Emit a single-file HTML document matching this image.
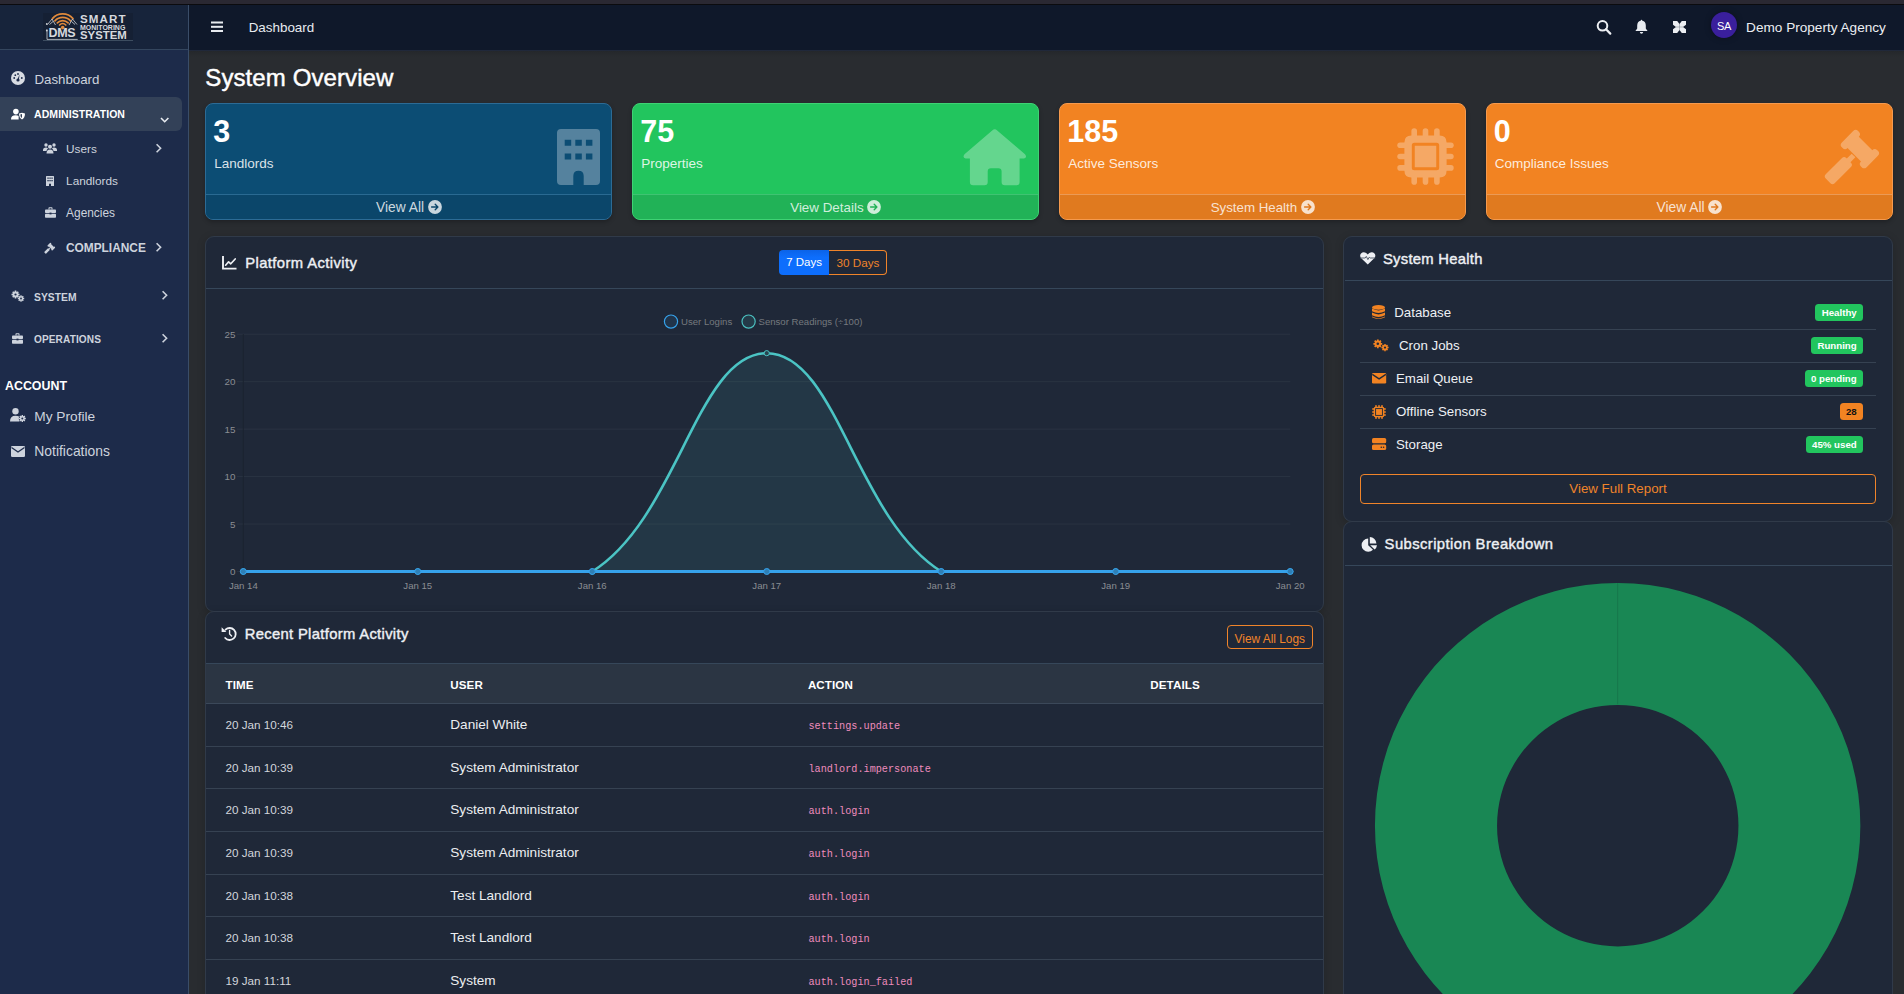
<!DOCTYPE html>
<html><head><meta charset="utf-8">
<style>
*{box-sizing:border-box;margin:0;padding:0}
html,body{width:1904px;height:994px;overflow:hidden;background:#292c30;font-family:"Liberation Sans",sans-serif;position:relative}
</style></head><body>

<div style="position:absolute;left:0px;top:0px;width:1904px;height:4px;background:#2a2832;"></div>
<div style="position:absolute;left:0px;top:4px;width:1904px;height:1px;background:#0b0b0e;"></div>
<div style="position:absolute;left:0px;top:5px;width:188px;height:989px;background:#1d2b4a;"></div>
<div style="position:absolute;left:0px;top:5px;width:188px;height:44px;background:#17243b;"></div>
<div style="position:absolute;left:0px;top:49px;width:188px;height:1px;background:#34465e;"></div>
<div style="position:absolute;left:188px;top:5px;width:1px;height:989px;background:#3a4d68;"></div>
<div style="position:absolute;left:189px;top:5px;width:1715px;height:45px;background:#0f182a;"></div>
<div style="position:absolute;left:189px;top:50px;width:1715px;height:1px;background:#20283a;"></div>
<div style="position:absolute;left:189px;top:51px;width:1715px;height:6px;background:linear-gradient(#24272b,#292c30);"></div>
<div style="position:absolute;left:43px;top:13px;width:90px;height:28px;background:#152034;"></div>
<div style="position:absolute;left:43px;top:40px;width:90px;height:1px;background:#3d4d60;"></div>
<svg style="position:absolute;left:43px;top:13px;overflow:visible;" width="40" height="28" viewBox="43 13 40 28">
<g fill="none" stroke="#e08a3c" stroke-width="1.7" stroke-linecap="round">
<path d="M52.4 18.6 A13.7 13.7 0 0 1 73 18.6"/>
<path d="M54.9 20.8 A10.6 10.6 0 0 1 70.5 20.8"/>
<path d="M57.3 22.9 A7.5 7.5 0 0 1 68.1 22.9"/>
<path d="M59.6 25 A4.4 4.4 0 0 1 65.8 25"/>
</g>
<circle cx="62.7" cy="27.6" r="1.8" fill="#e08a3c"/>
<g stroke="#cfd3d8" stroke-width="0.8" fill="none">
<path d="M47.5 24.5 L52 19 L55.5 25 M49.5 24.5 L53 21.5"/><path d="M77 24.5 L72.5 19 L69 25 M75 24.5 L71.5 21.5"/>
<path d="M47 29.5 V39.4 H77.7"/>
</g>
<circle cx="46.8" cy="24" r="0.9" fill="#cfd3d8"/><circle cx="46.8" cy="30.5" r="0.9" fill="#cfd3d8"/>
</svg>
<div style="position:absolute;top:27.02px;font-size:12.5px;line-height:1;color:#d6d9de;font-weight:bold;font-family:'Liberation Sans',sans-serif;white-space:nowrap;letter-spacing:-0.3px;left:48.50px;">DMS</div>
<div style="position:absolute;top:12.58px;font-size:11.6px;line-height:1;color:#d6d9de;font-weight:bold;font-family:'Liberation Sans',sans-serif;white-space:nowrap;letter-spacing:1.1px;left:80.00px;">SMART</div>
<div style="position:absolute;top:24.27px;font-size:7px;line-height:1;color:#d6d9de;font-weight:bold;font-family:'Liberation Sans',sans-serif;white-space:nowrap;left:80.00px;">MONITORING</div>
<div style="position:absolute;top:29.95px;font-size:11.4px;line-height:1;color:#d6d9de;font-weight:bold;font-family:'Liberation Sans',sans-serif;white-space:nowrap;left:80.00px;">SYSTEM</div>
<div style="position:absolute;left:0px;top:97px;width:182px;height:34px;background:#334158;border-radius:0 6px 6px 0"></div>
<svg style="position:absolute;left:11px;top:71px;overflow:visible;" width="14" height="14" viewBox="0 0 14 14"><circle cx="7" cy="7" r="7" fill="#d8dce3"/><circle cx="7" cy="9" r="1.6" fill="#1d2b4a"/><path d="M6.3 9 L8.6 3.2 L7.8 9.3Z" fill="#1d2b4a"/><circle cx="3.2" cy="7" r="0.9" fill="#1d2b4a"/><circle cx="4.3" cy="4.2" r="0.9" fill="#1d2b4a"/><circle cx="7" cy="3" r="0.9" fill="#1d2b4a"/><circle cx="10.8" cy="7" r="0.9" fill="#1d2b4a"/></svg>
<div style="position:absolute;top:72.64px;font-size:13.3px;line-height:1;color:#cdd3dd;font-weight:normal;font-family:'Liberation Sans',sans-serif;white-space:nowrap;left:34.40px;">Dashboard</div>
<svg style="position:absolute;left:11px;top:108px;overflow:visible;" width="15" height="12" viewBox="0 0 15 12"><circle cx="4.9" cy="3.6" r="2.8" fill="#fff"/><path d="M0 11.4 Q0 7.3 4.6 7.3 Q6.8 7.3 7.6 7.9 V11.4Z" fill="#fff"/><path d="M8 5.6 L11 4.7 L14 5.6 Q14 9.9 11 11.6 Q8 9.9 8 5.6Z" fill="#fff"/><path d="M9.3 6.5 L11 6 V10.1 Q9.3 9 9.3 6.5Z" fill="#334158"/></svg>
<div style="position:absolute;top:108.81px;font-size:10.5px;line-height:1;color:#ffffff;font-weight:bold;font-family:'Liberation Sans',sans-serif;white-space:nowrap;letter-spacing:0.05px;left:34.10px;">ADMINISTRATION</div>
<svg style="position:absolute;left:160.3px;top:116.5px;overflow:visible;" width="9.4" height="6" viewBox="0 0 9.4 6"><path d="M1 1 L4.7 4.7 L8.4 1" fill="none" stroke="#e8ebf0" stroke-width="1.6"/></svg>
<svg style="position:absolute;left:43px;top:143px;overflow:visible;" width="14" height="11" viewBox="0 0 14 11"><circle cx="3" cy="2" r="1.7" fill="#cdd3dd"/><circle cx="11" cy="2" r="1.7" fill="#cdd3dd"/><circle cx="7" cy="3.8" r="2" fill="#cdd3dd"/><path d="M0 7 Q0 4.5 3 4.5 Q4.5 4.5 5 5.5 Q3.5 6.5 3.5 8H0Z" fill="#cdd3dd"/><path d="M14 7 Q14 4.5 11 4.5 Q9.5 4.5 9 5.5 Q10.5 6.5 10.5 8H14Z" fill="#cdd3dd"/><path d="M3.5 10.5 Q3.5 6.5 7 6.5 Q10.5 6.5 10.5 10.5Z" fill="#cdd3dd"/></svg>
<div style="position:absolute;top:144.01px;font-size:11.8px;line-height:1;color:#cdd3dd;font-weight:normal;font-family:'Liberation Sans',sans-serif;white-space:nowrap;left:66.10px;">Users</div>
<svg style="position:absolute;left:155px;top:143px;overflow:visible;" width="7" height="11" viewBox="0 0 7 11"><path d="M1.6 1.2 L5.6 5.2 L1.6 9.2" fill="none" stroke="#cdd3dd" stroke-width="1.6"/></svg>
<svg style="position:absolute;left:46px;top:176px;overflow:visible;" width="8" height="10" viewBox="0 0 8 10"><path d="M0 0.6 Q0 0 0.6 0 H7.4 Q8 0 8 0.6 V10 H5 V8 Q4 7 3 8 V10 H0Z" fill="#cdd3dd"/><g fill="#1d2b4a"><rect x="1.4" y="1.5" width="1.3" height="1.3"/><rect x="3.4" y="1.5" width="1.3" height="1.3"/><rect x="5.4" y="1.5" width="1.3" height="1.3"/><rect x="1.4" y="4" width="1.3" height="1.3"/><rect x="3.4" y="4" width="1.3" height="1.3"/><rect x="5.4" y="4" width="1.3" height="1.3"/></g></svg>
<div style="position:absolute;top:175.71px;font-size:11.8px;line-height:1;color:#cdd3dd;font-weight:normal;font-family:'Liberation Sans',sans-serif;white-space:nowrap;left:66.10px;">Landlords</div>
<svg style="position:absolute;left:45px;top:207px;overflow:visible;" width="11" height="11" viewBox="0 0 11 11"><path d="M3.5 2.5 V1 Q3.5 0.3 4.2 0.3 H6.8 Q7.5 0.3 7.5 1 V2.5 H6.5 V1.3 H4.5 V2.5Z" fill="#cdd3dd"/><rect x="0" y="2.5" width="11" height="3.6" rx="0.8" fill="#cdd3dd"/><rect x="0" y="6.8" width="11" height="4" rx="0.8" fill="#cdd3dd"/><rect x="4.5" y="5.6" width="2" height="1.8" fill="#1d2b4a"/></svg>
<div style="position:absolute;top:207.63px;font-size:11.9px;line-height:1;color:#cdd3dd;font-weight:normal;font-family:'Liberation Sans',sans-serif;white-space:nowrap;left:66.10px;">Agencies</div>
<svg style="position:absolute;left:44px;top:242px;overflow:visible;" width="12" height="12" viewBox="0 0 12 12"><g fill="#cdd3dd" transform="translate(7.3 4.6) rotate(-45) scale(0.2)"><rect x="-8" y="-12" width="16" height="24"/><rect x="-11.5" y="-17.5" width="23" height="8" rx="3.5"/><rect x="-11.5" y="9.5" width="23" height="8" rx="3.5"/><rect x="-17" y="-2.6" width="8" height="5.2"/><rect x="-45" y="-6.3" width="29" height="12.6" rx="3"/></g></svg>
<div style="position:absolute;top:242.73px;font-size:11.9px;line-height:1;color:#cdd3dd;font-weight:bold;font-family:'Liberation Sans',sans-serif;white-space:nowrap;left:65.90px;">COMPLIANCE</div>
<svg style="position:absolute;left:155px;top:242px;overflow:visible;" width="7" height="11" viewBox="0 0 7 11"><path d="M1.6 1.2 L5.6 5.2 L1.6 9.2" fill="none" stroke="#cdd3dd" stroke-width="1.6"/></svg>
<svg style="position:absolute;left:11px;top:290px;overflow:visible;" width="14" height="12" viewBox="0 0 14 12"><g fill="#cdd3dd"><circle cx="4.5" cy="4.5" r="3"/><g stroke="#cdd3dd" stroke-width="1.6"><path d="M4.5 0.5V8.5M0.5 4.5H8.5M1.7 1.7L7.3 7.3M7.3 1.7L1.7 7.3"/></g><circle cx="10" cy="8.5" r="2.3"/><g stroke="#cdd3dd" stroke-width="1.3"><path d="M10 5.3V11.7M6.8 8.5H13.2M7.7 6.2L12.3 10.8M12.3 6.2L7.7 10.8"/></g></g><circle cx="4.5" cy="4.5" r="1.1" fill="#1d2b4a"/><circle cx="10" cy="8.5" r="0.9" fill="#1d2b4a"/></svg>
<div style="position:absolute;top:292.88px;font-size:10.3px;line-height:1;color:#cdd3dd;font-weight:bold;font-family:'Liberation Sans',sans-serif;white-space:nowrap;letter-spacing:0.05px;left:34.00px;">SYSTEM</div>
<svg style="position:absolute;left:161px;top:290px;overflow:visible;" width="7" height="11" viewBox="0 0 7 11"><path d="M1.6 1.2 L5.6 5.2 L1.6 9.2" fill="none" stroke="#cdd3dd" stroke-width="1.6"/></svg>
<svg style="position:absolute;left:12px;top:333px;overflow:visible;" width="11" height="11" viewBox="0 0 11 11"><path d="M3.5 2.5 V1 Q3.5 0.3 4.2 0.3 H6.8 Q7.5 0.3 7.5 1 V2.5 H6.5 V1.3 H4.5 V2.5Z" fill="#cdd3dd"/><rect x="0" y="2.5" width="11" height="3.6" rx="0.8" fill="#cdd3dd"/><rect x="0" y="6.8" width="11" height="4" rx="0.8" fill="#cdd3dd"/><rect x="4.5" y="5.6" width="2" height="1.8" fill="#1d2b4a"/></svg>
<div style="position:absolute;top:335.15px;font-size:10.1px;line-height:1;color:#cdd3dd;font-weight:bold;font-family:'Liberation Sans',sans-serif;white-space:nowrap;letter-spacing:0.1px;left:34.00px;">OPERATIONS</div>
<svg style="position:absolute;left:161px;top:333px;overflow:visible;" width="7" height="11" viewBox="0 0 7 11"><path d="M1.6 1.2 L5.6 5.2 L1.6 9.2" fill="none" stroke="#cdd3dd" stroke-width="1.6"/></svg>
<div style="position:absolute;top:379.70px;font-size:12.4px;line-height:1;color:#ffffff;font-weight:bold;font-family:'Liberation Sans',sans-serif;white-space:nowrap;left:5.00px;">ACCOUNT</div>
<svg style="position:absolute;left:10px;top:408px;overflow:visible;" width="16" height="14" viewBox="0 0 16 14"><circle cx="5.5" cy="3.2" r="3.2" fill="#cdd3dd"/><path d="M0 13.5 Q0 7.8 5.5 7.8 Q8 7.8 9 8.5 Q8.3 11 9.5 13.5Z" fill="#cdd3dd"/><circle cx="12.3" cy="10.5" r="2.4" fill="#cdd3dd"/><g stroke="#cdd3dd" stroke-width="1.4"><path d="M12.3 7V14M8.8 10.5H15.8M9.8 8L14.8 13M14.8 8L9.8 13"/></g><circle cx="12.3" cy="10.5" r="1" fill="#1d2b4a"/></svg>
<div style="position:absolute;top:409.70px;font-size:13.7px;line-height:1;color:#cdd3dd;font-weight:normal;font-family:'Liberation Sans',sans-serif;white-space:nowrap;left:34.30px;">My Profile</div>
<svg style="position:absolute;left:11px;top:446px;overflow:visible;" width="14" height="11" viewBox="0 0 14 11"><rect x="0" y="0" width="14" height="11" rx="1.3" fill="#cdd3dd"/><path d="M0.5 1.5 L7 6 L13.5 1.5" fill="none" stroke="#1d2b4a" stroke-width="1.3"/></svg>
<div style="position:absolute;top:445.43px;font-size:13.9px;line-height:1;color:#cdd3dd;font-weight:normal;font-family:'Liberation Sans',sans-serif;white-space:nowrap;left:34.30px;">Notifications</div>
<svg style="position:absolute;left:211px;top:21px;overflow:visible;" width="12" height="11" viewBox="0 0 12 11"><rect x="0" y="0.5" width="12" height="2" fill="#e8ebf0"/><rect x="0" y="4.8" width="12" height="2" fill="#e8ebf0"/><rect x="0" y="9" width="12" height="2" fill="#e8ebf0"/></svg>
<div style="position:absolute;top:21.46px;font-size:13.4px;line-height:1;color:#e8ebf0;font-weight:normal;font-family:'Liberation Sans',sans-serif;white-space:nowrap;left:248.70px;">Dashboard</div>
<svg style="position:absolute;left:1595px;top:19px;overflow:visible;" width="17" height="16" viewBox="0 0 17 16"><circle cx="7.5" cy="6.8" r="4.8" fill="none" stroke="#eceef2" stroke-width="2"/><path d="M11 10.3 L15.3 14.6" stroke="#eceef2" stroke-width="2.2" stroke-linecap="round"/></svg>
<svg style="position:absolute;left:1635px;top:19px;overflow:visible;" width="13" height="15" viewBox="0 0 13 15"><path d="M6.5 0.8 Q7.3 0.8 7.3 1.8 Q10.8 2.6 10.8 6.5 V9.5 L12.6 12 H0.4 L2.2 9.5 V6.5 Q2.2 2.6 5.7 1.8 Q5.7 0.8 6.5 0.8Z" fill="#e8ebf0"/><path d="M4.8 13 H8.2 Q8 14.8 6.5 14.8 Q5 14.8 4.8 13Z" fill="#e8ebf0"/></svg>
<svg style="position:absolute;left:1673px;top:21px;overflow:visible;" width="13" height="12" viewBox="0 0 13 12"><rect x="0" y="0" width="13" height="12" fill="#eceef2"/><path d="M4.2 0 L8.8 0 L6.5 3Z M4.2 12 L8.8 12 L6.5 9Z M0 3.8 L0 8.2 L3 6Z M13 3.8 L13 8.2 L10 6Z" fill="#0f182a"/><path d="M6.5 3 L6.5 9 M3 6 L10 6" stroke="#0f182a" stroke-width="0.5" opacity="0.5"/></svg>
<div style="position:absolute;left:1711px;top:12px;width:26px;height:26px;border-radius:50%;background:#3a1f9c;box-shadow:0 0 6px rgba(0,0,0,0.35)"></div>
<div style="position:absolute;top:20.99px;font-size:11px;line-height:1;color:#ffffff;font-weight:normal;font-family:'Liberation Sans',sans-serif;white-space:nowrap;letter-spacing:-0.4px;left:1424.00px;width:600px;text-align:center;">SA</div>
<div style="position:absolute;top:21.19px;font-size:13.6px;line-height:1;color:#eceef2;font-weight:normal;font-family:'Liberation Sans',sans-serif;white-space:nowrap;left:1746.10px;">Demo Property Agency</div>
<div style="position:absolute;top:66.28px;font-size:24px;line-height:1;color:#ffffff;font-weight:normal;font-family:'Liberation Sans',sans-serif;white-space:nowrap;letter-spacing:0.1px;left:205.30px;-webkit-text-stroke:0.45px #fff;">System Overview</div>
<div style="position:absolute;left:205px;top:103px;width:407.3px;height:117px;background:#0c4d74;border:1px solid #2c6b95;border-radius:8px;overflow:hidden;box-shadow:0 2px 4px rgba(0,0,0,0.25)"><div style="position:absolute;left:0;right:0;top:89.6px;bottom:0;background:#0b466a;border-top:1px solid #2a6a92"></div></div>
<div style="position:absolute;top:116.48px;font-size:30.5px;line-height:1;color:#ffffff;font-weight:bold;font-family:'Liberation Sans',sans-serif;white-space:nowrap;left:213.30px;">3</div>
<div style="position:absolute;top:157.47px;font-size:13.5px;line-height:1;color:rgba(255,255,255,0.86);font-weight:normal;font-family:'Liberation Sans',sans-serif;white-space:nowrap;left:214.20px;">Landlords</div>
<div style="position:absolute;top:200.82px;font-size:13.8px;line-height:1;color:rgba(255,255,255,0.8);font-weight:normal;font-family:'Liberation Sans',sans-serif;white-space:nowrap;left:376.05px;">View All</div>
<svg style="position:absolute;left:427.55px;top:200.3px;overflow:visible;" width="14" height="14" viewBox="0 0 14 14"><circle cx="7" cy="7" r="6.9" fill="rgba(255,255,255,0.78)"/><path d="M3.6 7 H9.6 M7.2 4.3 L9.9 7 L7.2 9.7" fill="none" stroke="#0b466a" stroke-width="1.35" stroke-linecap="round" stroke-linejoin="round"/></svg>
<div style="position:absolute;left:632px;top:103px;width:407.3px;height:117px;background:#22c55e;border:1px solid #3fd274;border-radius:8px;overflow:hidden;box-shadow:0 2px 4px rgba(0,0,0,0.25)"><div style="position:absolute;left:0;right:0;top:89.6px;bottom:0;background:#21b257;border-top:1px solid #3fc372"></div></div>
<div style="position:absolute;top:116.48px;font-size:30.5px;line-height:1;color:#ffffff;font-weight:bold;font-family:'Liberation Sans',sans-serif;white-space:nowrap;left:640.30px;">75</div>
<div style="position:absolute;top:157.47px;font-size:13.5px;line-height:1;color:rgba(255,255,255,0.86);font-weight:normal;font-family:'Liberation Sans',sans-serif;white-space:nowrap;left:641.20px;">Properties</div>
<div style="position:absolute;top:201.16px;font-size:13.4px;line-height:1;color:rgba(255,255,255,0.8);font-weight:normal;font-family:'Liberation Sans',sans-serif;white-space:nowrap;left:790.20px;">View Details</div>
<svg style="position:absolute;left:867.4px;top:200.3px;overflow:visible;" width="14" height="14" viewBox="0 0 14 14"><circle cx="7" cy="7" r="6.9" fill="rgba(255,255,255,0.78)"/><path d="M3.6 7 H9.6 M7.2 4.3 L9.9 7 L7.2 9.7" fill="none" stroke="#21b257" stroke-width="1.35" stroke-linecap="round" stroke-linejoin="round"/></svg>
<div style="position:absolute;left:1059.0px;top:103px;width:407.3px;height:117px;background:#f28322;border:1px solid #f59a4e;border-radius:8px;overflow:hidden;box-shadow:0 2px 4px rgba(0,0,0,0.25)"><div style="position:absolute;left:0;right:0;top:89.6px;bottom:0;background:#e07a1f;border-top:1px solid #eb9a55"></div></div>
<div style="position:absolute;top:116.48px;font-size:30.5px;line-height:1;color:#ffffff;font-weight:bold;font-family:'Liberation Sans',sans-serif;white-space:nowrap;left:1067.30px;">185</div>
<div style="position:absolute;top:157.47px;font-size:13.5px;line-height:1;color:rgba(255,255,255,0.86);font-weight:normal;font-family:'Liberation Sans',sans-serif;white-space:nowrap;left:1068.20px;">Active Sensors</div>
<div style="position:absolute;top:201.24px;font-size:13.3px;line-height:1;color:rgba(255,255,255,0.8);font-weight:normal;font-family:'Liberation Sans',sans-serif;white-space:nowrap;left:1210.70px;">System Health</div>
<svg style="position:absolute;left:1300.9px;top:200.3px;overflow:visible;" width="14" height="14" viewBox="0 0 14 14"><circle cx="7" cy="7" r="6.9" fill="rgba(255,255,255,0.78)"/><path d="M3.6 7 H9.6 M7.2 4.3 L9.9 7 L7.2 9.7" fill="none" stroke="#e07a1f" stroke-width="1.35" stroke-linecap="round" stroke-linejoin="round"/></svg>
<div style="position:absolute;left:1485.5px;top:103px;width:407.3px;height:117px;background:#f28322;border:1px solid #f59a4e;border-radius:8px;overflow:hidden;box-shadow:0 2px 4px rgba(0,0,0,0.25)"><div style="position:absolute;left:0;right:0;top:89.6px;bottom:0;background:#e07a1f;border-top:1px solid #eb9a55"></div></div>
<div style="position:absolute;top:116.48px;font-size:30.5px;line-height:1;color:#ffffff;font-weight:bold;font-family:'Liberation Sans',sans-serif;white-space:nowrap;left:1493.80px;">0</div>
<div style="position:absolute;top:157.47px;font-size:13.5px;line-height:1;color:rgba(255,255,255,0.86);font-weight:normal;font-family:'Liberation Sans',sans-serif;white-space:nowrap;left:1494.70px;">Compliance Issues</div>
<div style="position:absolute;top:200.82px;font-size:13.8px;line-height:1;color:rgba(255,255,255,0.8);font-weight:normal;font-family:'Liberation Sans',sans-serif;white-space:nowrap;left:1656.55px;">View All</div>
<svg style="position:absolute;left:1708.05px;top:200.3px;overflow:visible;" width="14" height="14" viewBox="0 0 14 14"><circle cx="7" cy="7" r="6.9" fill="rgba(255,255,255,0.78)"/><path d="M3.6 7 H9.6 M7.2 4.3 L9.9 7 L7.2 9.7" fill="none" stroke="#e07a1f" stroke-width="1.35" stroke-linecap="round" stroke-linejoin="round"/></svg>
<svg style="position:absolute;left:557px;top:129.2px;overflow:visible;" width="43" height="56" viewBox="0 0 43 56"><path fill="#fff" opacity="0.3" fill-rule="evenodd" d="M4 0 H39 Q43 0 43 4 V52 Q43 56 39 56 H26.7 V47 Q26.7 41.8 21.5 41.8 Q16.3 41.8 16.3 47 V56 H4 Q0 56 0 52 V4 Q0 0 4 0Z M7.7 10.7 h6.5 v6 h-6.5Z M18.3 10.7 h6.5 v6 h-6.5Z M28.9 10.7 h6.5 v6 h-6.5Z M7.7 24.6 h6.5 v6 h-6.5Z M18.3 24.6 h6.5 v6 h-6.5Z M28.9 24.6 h6.5 v6 h-6.5Z"/></svg>
<svg style="position:absolute;left:963px;top:128.5px;overflow:visible;" width="64" height="56.5" viewBox="0 0 64 56.5"><path fill="#fff" opacity="0.3" d="M29.2 1.5 Q31.7 -0.8 34.2 1.5 L62 25.2 Q64.5 28.6 61 29.5 L56.6 29.5 L56.6 53 Q56.6 56.2 53.4 56.2 L41.8 56.2 Q38.6 56.2 38.6 53 L38.6 42.5 Q38.6 39.3 35.4 39.3 L27.9 39.3 Q24.7 39.3 24.7 42.5 L24.7 53 Q24.7 56.2 21.5 56.2 L10.1 56.2 Q6.9 56.2 6.9 53 L6.9 29.5 L2.6 29.5 Q-0.9 28.6 1.5 25.2Z"/></svg>
<svg style="position:absolute;left:1396.7px;top:128.4px;overflow:visible;" width="57" height="57" viewBox="-28.5 -28.5 57 57"><g fill="#fff" opacity="0.3"><rect x="-14.100000000000001" y="-28.2" width="5.6" height="10" rx="2.8"/><rect x="-14.100000000000001" y="18.2" width="5.6" height="10" rx="2.8"/><rect x="-28.2" y="-14.100000000000001" width="10" height="5.6" rx="2.8"/><rect x="18.2" y="-14.100000000000001" width="10" height="5.6" rx="2.8"/><rect x="-2.8" y="-28.2" width="5.6" height="10" rx="2.8"/><rect x="-2.8" y="18.2" width="5.6" height="10" rx="2.8"/><rect x="-28.2" y="-2.8" width="10" height="5.6" rx="2.8"/><rect x="18.2" y="-2.8" width="10" height="5.6" rx="2.8"/><rect x="8.600000000000001" y="-28.2" width="5.6" height="10" rx="2.8"/><rect x="8.600000000000001" y="18.2" width="5.6" height="10" rx="2.8"/><rect x="-28.2" y="8.600000000000001" width="10" height="5.6" rx="2.8"/><rect x="18.2" y="8.600000000000001" width="10" height="5.6" rx="2.8"/><path fill-rule="evenodd" d="M-14.1 -21.1 H14.1 Q21.1 -21.1 21.1 -14.1 V14.1 Q21.1 21.1 14.1 21.1 H-14.1 Q-21.1 21.1 -21.1 14.1 V-14.1 Q-21.1 -21.1 -14.1 -21.1Z M-11.2 -13.7 H11.2 Q13.7 -13.7 13.7 -11.2 V11.2 Q13.7 13.7 11.2 13.7 H-11.2 Q-13.7 13.7 -13.7 11.2 V-11.2 Q-13.7 -13.7 -11.2 -13.7Z"/><rect x="-10.75" y="-10.75" width="21.5" height="21.5"/></g></svg>
<svg style="position:absolute;left:1815px;top:120px;overflow:visible;" width="75" height="75" viewBox="0 0 75 75"><g fill="#fff" opacity="0.3" transform="translate(44.9 29.1) rotate(-45)"><rect x="-8" y="-12" width="16" height="24"/><rect x="-11.5" y="-17.5" width="23" height="8" rx="3.5"/><rect x="-11.5" y="9.5" width="23" height="8" rx="3.5"/><rect x="-17" y="-2.6" width="8" height="5.2"/><rect x="-45" y="-6.3" width="29" height="12.6" rx="3"/></g></svg>
<div style="position:absolute;left:205px;top:236px;width:1119px;height:376px;background:#1f2838;border:1px solid #303a49;border-radius:9px;box-shadow:0 2px 8px rgba(0,0,0,0.18)"></div>
<div style="position:absolute;left:206px;top:288px;width:1117px;height:1px;background:#36475a;"></div>
<svg style="position:absolute;left:221.5px;top:256px;overflow:visible;" width="15" height="14" viewBox="0 0 15 14"><path d="M1 0 V12.6 H14.5" fill="none" stroke="#eef0f4" stroke-width="1.9"/><path d="M3.6 9.2 L6.6 5.8 L8.8 7.8 L13.2 3" fill="none" stroke="#eef0f4" stroke-width="1.7" stroke-linejoin="round" stroke-linecap="round"/></svg>
<div style="position:absolute;top:255.77px;font-size:14.8px;line-height:1;color:#eef0f4;font-weight:normal;font-family:'Liberation Sans',sans-serif;white-space:nowrap;letter-spacing:0.4px;left:245.20px;-webkit-text-stroke:0.4px #eef0f4;">Platform Activity</div>
<div style="position:absolute;left:779.3px;top:249.9px;width:49.7px;height:25.1px;background:linear-gradient(#0b63e8,#0d6efd 30%);border-radius:4px 0 0 4px"></div>
<div style="position:absolute;left:829px;top:249.9px;width:58.2px;height:25.1px;border:1px solid #f0842a;border-left:none;border-radius:0 4px 4px 0"></div>
<div style="position:absolute;top:256.77px;font-size:11.5px;line-height:1;color:#ffffff;font-weight:normal;font-family:'Liberation Sans',sans-serif;white-space:nowrap;left:504.10px;width:600px;text-align:center;">7 Days</div>
<div style="position:absolute;top:256.60px;font-size:11.7px;line-height:1;color:#f0842a;font-weight:normal;font-family:'Liberation Sans',sans-serif;white-space:nowrap;left:558.00px;width:600px;text-align:center;">30 Days</div>
<svg style="position:absolute;left:0;top:0" width="1904" height="994" viewBox="0 0 1904 994"><rect x="237" y="571.00" width="1053.30" height="1" fill="#2a3342"/><rect x="237" y="523.54" width="1053.30" height="1" fill="#2a3342"/><rect x="237" y="476.08" width="1053.30" height="1" fill="#2a3342"/><rect x="237" y="428.62" width="1053.30" height="1" fill="#2a3342"/><rect x="237" y="381.16" width="1053.30" height="1" fill="#2a3342"/><rect x="237" y="333.70" width="1053.30" height="1" fill="#2a3342"/><rect x="242.8" y="334" width="1" height="237.5" fill="#1b2330"/><path d="M243.30 571.50 C313.09 571.50 347.99 571.50 417.78 571.50 C487.57 571.50 538.61 571.50 592.26 571.50 C678.19 517.74 696.95 353.18 766.74 353.18 C836.53 353.18 855.29 517.74 941.22 571.50 C994.87 571.50 1045.91 571.50 1115.70 571.50 C1185.49 571.50 1220.39 571.50 1290.18 571.50 L1290.18 571.5 L243.30 571.5Z" fill="rgba(75,192,192,0.1)"/><path d="M243.30 571.50 C313.09 571.50 347.99 571.50 417.78 571.50 C487.57 571.50 538.61 571.50 592.26 571.50 C678.19 517.74 696.95 353.18 766.74 353.18 C836.53 353.18 855.29 517.74 941.22 571.50 C994.87 571.50 1045.91 571.50 1115.70 571.50 C1185.49 571.50 1220.39 571.50 1290.18 571.50" fill="none" stroke="#4bc4c4" stroke-width="2.6"/><circle cx="243.30" cy="571.50" r="2.6" fill="#2a4450" stroke="#4bc4c4" stroke-width="1"/><circle cx="417.78" cy="571.50" r="2.6" fill="#2a4450" stroke="#4bc4c4" stroke-width="1"/><circle cx="592.26" cy="571.50" r="2.6" fill="#2a4450" stroke="#4bc4c4" stroke-width="1"/><circle cx="766.74" cy="353.18" r="2.6" fill="#2a4450" stroke="#4bc4c4" stroke-width="1"/><circle cx="941.22" cy="571.50" r="2.6" fill="#2a4450" stroke="#4bc4c4" stroke-width="1"/><circle cx="1115.70" cy="571.50" r="2.6" fill="#2a4450" stroke="#4bc4c4" stroke-width="1"/><circle cx="1290.18" cy="571.50" r="2.6" fill="#2a4450" stroke="#4bc4c4" stroke-width="1"/><path d="M243.3 571.5 H1290.1799999999998" stroke="#36a2eb" stroke-width="3.2"/><circle cx="243.30" cy="571.5" r="3" fill="#2f7fb5" stroke="#36a2eb" stroke-width="1"/><circle cx="417.78" cy="571.5" r="3" fill="#2f7fb5" stroke="#36a2eb" stroke-width="1"/><circle cx="592.26" cy="571.5" r="3" fill="#2f7fb5" stroke="#36a2eb" stroke-width="1"/><circle cx="766.74" cy="571.5" r="3" fill="#2f7fb5" stroke="#36a2eb" stroke-width="1"/><circle cx="941.22" cy="571.5" r="3" fill="#2f7fb5" stroke="#36a2eb" stroke-width="1"/><circle cx="1115.70" cy="571.5" r="3" fill="#2f7fb5" stroke="#36a2eb" stroke-width="1"/><circle cx="1290.18" cy="571.5" r="3" fill="#2f7fb5" stroke="#36a2eb" stroke-width="1"/><circle cx="671" cy="321.6" r="6.6" fill="rgba(54,162,235,0.1)" stroke="#36a2eb" stroke-width="1.2"/><circle cx="748.6" cy="321.6" r="6.6" fill="rgba(75,192,192,0.12)" stroke="#4bc0c0" stroke-width="1.2"/></svg>
<div style="position:absolute;top:316.87px;font-size:9.6px;line-height:1;color:#75797e;font-weight:normal;font-family:'Liberation Sans',sans-serif;white-space:nowrap;left:681.00px;">User Logins</div>
<div style="position:absolute;top:316.87px;font-size:9.6px;line-height:1;color:#75797e;font-weight:normal;font-family:'Liberation Sans',sans-serif;white-space:nowrap;left:758.50px;">Sensor Readings (÷100)</div>
<div style="position:absolute;top:567.30px;font-size:9.8px;line-height:1;color:#8a8d93;font-weight:normal;font-family:'Liberation Sans',sans-serif;white-space:nowrap;right:1668.50px;text-align:right;">0</div>
<div style="position:absolute;top:519.84px;font-size:9.8px;line-height:1;color:#8a8d93;font-weight:normal;font-family:'Liberation Sans',sans-serif;white-space:nowrap;right:1668.50px;text-align:right;">5</div>
<div style="position:absolute;top:472.38px;font-size:9.8px;line-height:1;color:#8a8d93;font-weight:normal;font-family:'Liberation Sans',sans-serif;white-space:nowrap;right:1668.50px;text-align:right;">10</div>
<div style="position:absolute;top:424.92px;font-size:9.8px;line-height:1;color:#8a8d93;font-weight:normal;font-family:'Liberation Sans',sans-serif;white-space:nowrap;right:1668.50px;text-align:right;">15</div>
<div style="position:absolute;top:377.46px;font-size:9.8px;line-height:1;color:#8a8d93;font-weight:normal;font-family:'Liberation Sans',sans-serif;white-space:nowrap;right:1668.50px;text-align:right;">20</div>
<div style="position:absolute;top:330.00px;font-size:9.8px;line-height:1;color:#8a8d93;font-weight:normal;font-family:'Liberation Sans',sans-serif;white-space:nowrap;right:1668.50px;text-align:right;">25</div>
<div style="position:absolute;top:581.47px;font-size:9.6px;line-height:1;color:#8a8d93;font-weight:normal;font-family:'Liberation Sans',sans-serif;white-space:nowrap;left:-56.70px;width:600px;text-align:center;">Jan 14</div>
<div style="position:absolute;top:581.47px;font-size:9.6px;line-height:1;color:#8a8d93;font-weight:normal;font-family:'Liberation Sans',sans-serif;white-space:nowrap;left:117.78px;width:600px;text-align:center;">Jan 15</div>
<div style="position:absolute;top:581.47px;font-size:9.6px;line-height:1;color:#8a8d93;font-weight:normal;font-family:'Liberation Sans',sans-serif;white-space:nowrap;left:292.26px;width:600px;text-align:center;">Jan 16</div>
<div style="position:absolute;top:581.47px;font-size:9.6px;line-height:1;color:#8a8d93;font-weight:normal;font-family:'Liberation Sans',sans-serif;white-space:nowrap;left:466.74px;width:600px;text-align:center;">Jan 17</div>
<div style="position:absolute;top:581.47px;font-size:9.6px;line-height:1;color:#8a8d93;font-weight:normal;font-family:'Liberation Sans',sans-serif;white-space:nowrap;left:641.22px;width:600px;text-align:center;">Jan 18</div>
<div style="position:absolute;top:581.47px;font-size:9.6px;line-height:1;color:#8a8d93;font-weight:normal;font-family:'Liberation Sans',sans-serif;white-space:nowrap;left:815.70px;width:600px;text-align:center;">Jan 19</div>
<div style="position:absolute;top:581.47px;font-size:9.6px;line-height:1;color:#8a8d93;font-weight:normal;font-family:'Liberation Sans',sans-serif;white-space:nowrap;left:990.18px;width:600px;text-align:center;">Jan 20</div>
<div style="position:absolute;left:205px;top:611px;width:1119px;height:420px;background:#1f2838;border:1px solid #303a49;border-radius:9px;box-shadow:0 2px 8px rgba(0,0,0,0.18)"></div>
<div style="position:absolute;left:206px;top:663px;width:1117px;height:1px;background:#36475a;"></div>
<div style="position:absolute;left:206px;top:664px;width:1117px;height:39px;background:#2b3543;"></div>
<svg style="position:absolute;left:220px;top:626px;overflow:visible;" width="18" height="16" viewBox="220 626 18 16"><path d="M225.5 629.7 A6 6 0 1 1 225.2 638" fill="none" stroke="#eef0f4" stroke-width="1.8" stroke-linecap="round"/><path d="M221.6 627.3 L221.6 632.1 L226.4 632.1 Z" fill="#eef0f4"/><path d="M229.6 630.5 V634 L231.6 636" fill="none" stroke="#eef0f4" stroke-width="1.4" stroke-linecap="round"/></svg>
<div style="position:absolute;top:627.07px;font-size:14.8px;line-height:1;color:#eef0f4;font-weight:normal;font-family:'Liberation Sans',sans-serif;white-space:nowrap;letter-spacing:0.32px;left:244.70px;-webkit-text-stroke:0.4px #eef0f4;">Recent Platform Activity</div>
<div style="position:absolute;left:1227px;top:625.3px;width:85.6px;height:24.2px;border:1px solid #f0842a;border-radius:4px"></div>
<div style="position:absolute;top:633.53px;font-size:11.9px;line-height:1;color:#f0842a;font-weight:normal;font-family:'Liberation Sans',sans-serif;white-space:nowrap;left:969.80px;width:600px;text-align:center;">View All Logs</div>
<div style="position:absolute;top:679.18px;font-size:11.6px;line-height:1;color:#ffffff;font-weight:bold;font-family:'Liberation Sans',sans-serif;white-space:nowrap;letter-spacing:0.1px;left:225.50px;">TIME</div>
<div style="position:absolute;top:679.18px;font-size:11.6px;line-height:1;color:#ffffff;font-weight:bold;font-family:'Liberation Sans',sans-serif;white-space:nowrap;letter-spacing:0.1px;left:450.30px;">USER</div>
<div style="position:absolute;top:679.18px;font-size:11.6px;line-height:1;color:#ffffff;font-weight:bold;font-family:'Liberation Sans',sans-serif;white-space:nowrap;letter-spacing:0.1px;left:807.90px;">ACTION</div>
<div style="position:absolute;top:679.18px;font-size:11.6px;line-height:1;color:#ffffff;font-weight:bold;font-family:'Liberation Sans',sans-serif;white-space:nowrap;letter-spacing:0.1px;left:1150.30px;">DETAILS</div>
<div style="position:absolute;left:206px;top:703px;width:1117px;height:1px;background:#3b4859;"></div>
<div style="position:absolute;top:719.30px;font-size:11.7px;line-height:1;color:#d2d6dc;font-weight:normal;font-family:'Liberation Sans',sans-serif;white-space:nowrap;left:225.50px;">20 Jan 10:46</div>
<div style="position:absolute;top:718.49px;font-size:13.6px;line-height:1;color:#eceef1;font-weight:normal;font-family:'Liberation Sans',sans-serif;white-space:nowrap;left:450.30px;">Daniel White</div>
<div style="position:absolute;top:721.77px;font-size:10.2px;line-height:1;color:#ee8cbd;font-weight:normal;font-family:'Liberation Mono',monospace;white-space:nowrap;left:808.50px;">settings.update</div>
<div style="position:absolute;left:206px;top:746px;width:1117px;height:1px;background:#364252;"></div>
<div style="position:absolute;top:762.30px;font-size:11.7px;line-height:1;color:#d2d6dc;font-weight:normal;font-family:'Liberation Sans',sans-serif;white-space:nowrap;left:225.50px;">20 Jan 10:39</div>
<div style="position:absolute;top:761.49px;font-size:13.6px;line-height:1;color:#eceef1;font-weight:normal;font-family:'Liberation Sans',sans-serif;white-space:nowrap;left:450.30px;">System Administrator</div>
<div style="position:absolute;top:764.77px;font-size:10.2px;line-height:1;color:#ee8cbd;font-weight:normal;font-family:'Liberation Mono',monospace;white-space:nowrap;left:808.50px;">landlord.impersonate</div>
<div style="position:absolute;left:206px;top:788px;width:1117px;height:1px;background:#364252;"></div>
<div style="position:absolute;top:804.30px;font-size:11.7px;line-height:1;color:#d2d6dc;font-weight:normal;font-family:'Liberation Sans',sans-serif;white-space:nowrap;left:225.50px;">20 Jan 10:39</div>
<div style="position:absolute;top:803.49px;font-size:13.6px;line-height:1;color:#eceef1;font-weight:normal;font-family:'Liberation Sans',sans-serif;white-space:nowrap;left:450.30px;">System Administrator</div>
<div style="position:absolute;top:806.77px;font-size:10.2px;line-height:1;color:#ee8cbd;font-weight:normal;font-family:'Liberation Mono',monospace;white-space:nowrap;left:808.50px;">auth.login</div>
<div style="position:absolute;left:206px;top:831px;width:1117px;height:1px;background:#364252;"></div>
<div style="position:absolute;top:847.30px;font-size:11.7px;line-height:1;color:#d2d6dc;font-weight:normal;font-family:'Liberation Sans',sans-serif;white-space:nowrap;left:225.50px;">20 Jan 10:39</div>
<div style="position:absolute;top:846.49px;font-size:13.6px;line-height:1;color:#eceef1;font-weight:normal;font-family:'Liberation Sans',sans-serif;white-space:nowrap;left:450.30px;">System Administrator</div>
<div style="position:absolute;top:849.77px;font-size:10.2px;line-height:1;color:#ee8cbd;font-weight:normal;font-family:'Liberation Mono',monospace;white-space:nowrap;left:808.50px;">auth.login</div>
<div style="position:absolute;left:206px;top:874px;width:1117px;height:1px;background:#364252;"></div>
<div style="position:absolute;top:890.30px;font-size:11.7px;line-height:1;color:#d2d6dc;font-weight:normal;font-family:'Liberation Sans',sans-serif;white-space:nowrap;left:225.50px;">20 Jan 10:38</div>
<div style="position:absolute;top:889.49px;font-size:13.6px;line-height:1;color:#eceef1;font-weight:normal;font-family:'Liberation Sans',sans-serif;white-space:nowrap;left:450.30px;">Test Landlord</div>
<div style="position:absolute;top:892.77px;font-size:10.2px;line-height:1;color:#ee8cbd;font-weight:normal;font-family:'Liberation Mono',monospace;white-space:nowrap;left:808.50px;">auth.login</div>
<div style="position:absolute;left:206px;top:916px;width:1117px;height:1px;background:#364252;"></div>
<div style="position:absolute;top:932.30px;font-size:11.7px;line-height:1;color:#d2d6dc;font-weight:normal;font-family:'Liberation Sans',sans-serif;white-space:nowrap;left:225.50px;">20 Jan 10:38</div>
<div style="position:absolute;top:931.49px;font-size:13.6px;line-height:1;color:#eceef1;font-weight:normal;font-family:'Liberation Sans',sans-serif;white-space:nowrap;left:450.30px;">Test Landlord</div>
<div style="position:absolute;top:934.77px;font-size:10.2px;line-height:1;color:#ee8cbd;font-weight:normal;font-family:'Liberation Mono',monospace;white-space:nowrap;left:808.50px;">auth.login</div>
<div style="position:absolute;left:206px;top:959px;width:1117px;height:1px;background:#364252;"></div>
<div style="position:absolute;top:975.30px;font-size:11.7px;line-height:1;color:#d2d6dc;font-weight:normal;font-family:'Liberation Sans',sans-serif;white-space:nowrap;left:225.50px;">19 Jan 11:11</div>
<div style="position:absolute;top:974.49px;font-size:13.6px;line-height:1;color:#eceef1;font-weight:normal;font-family:'Liberation Sans',sans-serif;white-space:nowrap;left:450.30px;">System</div>
<div style="position:absolute;top:977.77px;font-size:10.2px;line-height:1;color:#ee8cbd;font-weight:normal;font-family:'Liberation Mono',monospace;white-space:nowrap;left:808.50px;">auth.login_failed</div>
<div style="position:absolute;left:1343px;top:236px;width:549.5px;height:286px;background:#1f2838;border:1px solid #303a49;border-radius:9px;box-shadow:0 2px 8px rgba(0,0,0,0.18)"></div>
<div style="position:absolute;left:1344.5px;top:280px;width:547px;height:1px;background:#36475a;"></div>
<svg style="position:absolute;left:1359.5px;top:252.3px;overflow:visible;" width="15.5" height="12.8" viewBox="0 0 15.5 12.8"><path d="M7.75 12.6 L1.5 6.6 Q-0.9 3.9 1 1.5 Q3.3 -0.9 6.2 1.1 L7.75 2.4 L9.3 1.1 Q12.2 -0.9 14.5 1.5 Q16.4 3.9 14 6.6Z" fill="#eef0f4"/><path d="M0.3 6 H5.2 L6.3 4.4 L7.9 7.6 L9.2 5.2 L10.2 6 H15.2" fill="none" stroke="#56606e" stroke-width="1" stroke-linejoin="round"/></svg>
<div style="position:absolute;top:252.47px;font-size:14.8px;line-height:1;color:#eef0f4;font-weight:normal;font-family:'Liberation Sans',sans-serif;white-space:nowrap;letter-spacing:0.28px;left:1382.90px;-webkit-text-stroke:0.4px #eef0f4;">System Health</div>
<div style="position:absolute;top:306.14px;font-size:13.3px;line-height:1;color:#eef0f4;font-weight:normal;font-family:'Liberation Sans',sans-serif;white-space:nowrap;left:1394.20px;">Database</div>
<div style="position:absolute;right:41px;top:304.0px;height:17.2px;padding:0 6.3px;background:#22c55e;border-radius:3.5px;color:#fff;font-weight:bold;font-size:9.7px;line-height:17.2px;font-family:'Liberation Sans',sans-serif;white-space:nowrap">Healthy</div>
<div style="position:absolute;left:1360px;top:329px;width:516px;height:1px;background:#364252;"></div>
<div style="position:absolute;top:339.14px;font-size:13.3px;line-height:1;color:#eef0f4;font-weight:normal;font-family:'Liberation Sans',sans-serif;white-space:nowrap;left:1399.00px;">Cron Jobs</div>
<div style="position:absolute;right:41px;top:337.0px;height:17.2px;padding:0 6.3px;background:#22c55e;border-radius:3.5px;color:#fff;font-weight:bold;font-size:9.7px;line-height:17.2px;font-family:'Liberation Sans',sans-serif;white-space:nowrap">Running</div>
<div style="position:absolute;left:1360px;top:362px;width:516px;height:1px;background:#364252;"></div>
<div style="position:absolute;top:372.14px;font-size:13.3px;line-height:1;color:#eef0f4;font-weight:normal;font-family:'Liberation Sans',sans-serif;white-space:nowrap;left:1396.00px;">Email Queue</div>
<div style="position:absolute;right:41px;top:370.0px;height:17.2px;padding:0 6.3px;background:#22c55e;border-radius:3.5px;color:#fff;font-weight:bold;font-size:9.7px;line-height:17.2px;font-family:'Liberation Sans',sans-serif;white-space:nowrap">0 pending</div>
<div style="position:absolute;left:1360px;top:395px;width:516px;height:1px;background:#364252;"></div>
<div style="position:absolute;top:405.14px;font-size:13.3px;line-height:1;color:#eef0f4;font-weight:normal;font-family:'Liberation Sans',sans-serif;white-space:nowrap;left:1396.00px;">Offline Sensors</div>
<div style="position:absolute;right:41px;top:403.0px;height:17.2px;padding:0 6.3px;background:#f28322;border-radius:3.5px;color:#111;font-weight:bold;font-size:9.7px;line-height:17.2px;font-family:'Liberation Sans',sans-serif;white-space:nowrap">28</div>
<div style="position:absolute;left:1360px;top:428px;width:516px;height:1px;background:#364252;"></div>
<div style="position:absolute;top:438.14px;font-size:13.3px;line-height:1;color:#eef0f4;font-weight:normal;font-family:'Liberation Sans',sans-serif;white-space:nowrap;left:1396.00px;">Storage</div>
<div style="position:absolute;right:41px;top:436.0px;height:17.2px;padding:0 6.3px;background:#22c55e;border-radius:3.5px;color:#fff;font-weight:bold;font-size:9.7px;line-height:17.2px;font-family:'Liberation Sans',sans-serif;white-space:nowrap">45% used</div>
<svg style="position:absolute;left:1372.2px;top:304.9px;overflow:visible;" width="13" height="14.5" viewBox="0 0 13 14.5"><ellipse cx="6.5" cy="2.4" rx="6.5" ry="2.4" fill="#f28322"/><path d="M0 3.6 Q6.5 7.2 13 3.6 V6.2 Q6.5 9.8 0 6.2Z" fill="#f28322"/><path d="M0 7.6 Q6.5 11.2 13 7.6 V10.2 Q6.5 13.8 0 10.2Z" fill="#f28322"/><path d="M0 11.6 Q6.5 15.2 13 11.6 V12.2 Q6.5 15.8 0 12.2Z" fill="#f28322"/></svg>
<svg style="position:absolute;left:1372.8px;top:339px;overflow:visible;" width="17" height="13" viewBox="0 0 17 13"><g fill="#f28322"><circle cx="4.8" cy="4.8" r="3.2"/><g stroke="#f28322" stroke-width="1.8"><path d="M4.8 0.4V9.2M0.4 4.8H9.2M1.7 1.7L7.9 7.9M7.9 1.7L1.7 7.9"/></g><circle cx="12" cy="8.6" r="2.6"/><g stroke="#f28322" stroke-width="1.5"><path d="M12 5V12.2M8.4 8.6H15.6M9.5 6.1L14.5 11.1M14.5 6.1L9.5 11.1"/></g></g><circle cx="4.8" cy="4.8" r="1.3" fill="#1f2838"/><circle cx="12" cy="8.6" r="1.1" fill="#1f2838"/></svg>
<svg style="position:absolute;left:1372.2px;top:372.7px;overflow:visible;" width="14.2" height="10.6" viewBox="0 0 14.2 10.6"><rect x="0" y="0" width="14.2" height="10.6" rx="1.3" fill="#f28322"/><path d="M0.3 1.4 L7.1 5.9 L13.9 1.4" fill="none" stroke="#1f2838" stroke-width="1.3"/></svg>
<svg style="position:absolute;left:1372.2px;top:405px;overflow:visible;" width="14" height="14" viewBox="-7 -7 14 14"><g fill="#f28322"><rect x="-3.8" y="-7" width="1.6" height="14" rx="0.8"/><rect x="-7" y="-3.8" width="14" height="1.6" rx="0.8"/><rect x="-0.8" y="-7" width="1.6" height="14" rx="0.8"/><rect x="-7" y="-0.8" width="14" height="1.6" rx="0.8"/><rect x="2.2" y="-7" width="1.6" height="14" rx="0.8"/><rect x="-7" y="2.2" width="14" height="1.6" rx="0.8"/><rect x="-5.3" y="-5.3" width="10.6" height="10.6" rx="1.8"/></g><rect x="-3.4" y="-3.4" width="6.8" height="6.8" fill="none" stroke="#1f2838" stroke-width="0.9"/></svg>
<svg style="position:absolute;left:1372.2px;top:438.1px;overflow:visible;" width="14.2" height="12.1" viewBox="0 0 14.2 12.1"><rect x="0" y="0" width="14.2" height="5.3" rx="1.6" fill="#f28322"/><rect x="0" y="6.4" width="14.2" height="5.7" rx="1.6" fill="#f28322"/><circle cx="9.3" cy="9.2" r="0.8" fill="#1f2838"/><circle cx="11.6" cy="9.2" r="0.8" fill="#1f2838"/></svg>
<div style="position:absolute;left:1360px;top:473.7px;width:516px;height:30.2px;border:1px solid #f0842a;border-radius:4px"></div>
<div style="position:absolute;top:482.14px;font-size:13.3px;line-height:1;color:#f0842a;font-weight:normal;font-family:'Liberation Sans',sans-serif;white-space:nowrap;left:1318.00px;width:600px;text-align:center;">View Full Report</div>
<div style="position:absolute;left:1343px;top:521px;width:549.5px;height:520px;background:#1f2838;border:1px solid #303a49;border-radius:9px"></div>
<div style="position:absolute;left:1344.5px;top:565px;width:547px;height:1px;background:#36475a;"></div>
<svg style="position:absolute;left:1360.5px;top:536.8px;overflow:visible;" width="16.5" height="15" viewBox="0 0 16.5 15"><path d="M7.2 1.6 V8.2 L12 12.8 Q10 14.8 7.2 14.8 A6.6 6.6 0 0 1 7.2 1.6Z" fill="#eef0f4"/><path d="M8.8 0 A6.6 6.6 0 0 1 15.4 6.6 H8.8Z" fill="#eef0f4"/><path d="M9.2 8.2 H16 A6.6 6.6 0 0 1 13.6 12.6Z" fill="#eef0f4"/></svg>
<div style="position:absolute;top:536.57px;font-size:14.8px;line-height:1;color:#eef0f4;font-weight:normal;font-family:'Liberation Sans',sans-serif;white-space:nowrap;letter-spacing:0.42px;left:1384.60px;-webkit-text-stroke:0.4px #eef0f4;">Subscription Breakdown</div>
<svg style="position:absolute;left:0;top:0" width="1904" height="994" viewBox="0 0 1904 994"><path fill-rule="evenodd" fill="#198754" d="M1617.7 583 A242.7 242.7 0 1 1 1617.6 583Z M1617.7 705 A120.7 120.7 0 1 0 1617.8 705Z"/><rect x="1617.2" y="583" width="1" height="121.3" fill="#17774b"/></svg>
</body></html>
